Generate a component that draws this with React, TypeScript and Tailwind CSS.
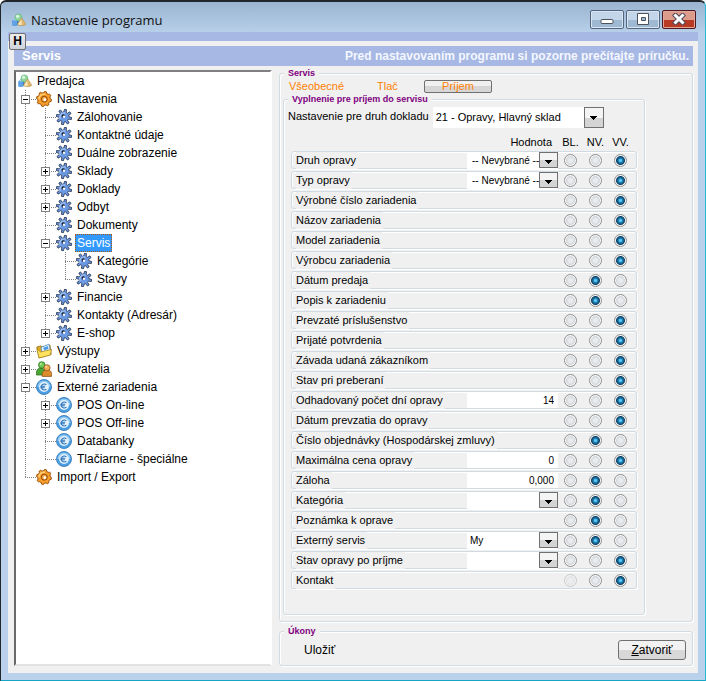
import { useState } from 'react';
import type { ReactNode } from 'react';

type IconName = 'gear' | 'cog' | 'folder' | 'users' | 'euro';

interface TreeNode {
  label: string;
  icon: IconName;
  expandable?: boolean;
  children?: TreeNode[];
}

interface Row {
  label: string;
  kind?: 'select' | 'input';
  value?: string;
  checked: number;
  locked?: boolean;
}

const tree: TreeNode[] = [
  {
    label: 'Nastavenia',
    icon: 'gear',
    children: [
      { label: 'Zálohovanie', icon: 'cog' },
      { label: 'Kontaktné údaje', icon: 'cog' },
      { label: 'Duálne zobrazenie', icon: 'cog' },
      { label: 'Sklady', icon: 'cog', expandable: true },
      { label: 'Doklady', icon: 'cog', expandable: true },
      { label: 'Odbyt', icon: 'cog', expandable: true },
      { label: 'Dokumenty', icon: 'cog' },
      {
        label: 'Servis',
        icon: 'cog',
        children: [
          { label: 'Kategórie', icon: 'cog' },
          { label: 'Stavy', icon: 'cog' },
        ],
      },
      { label: 'Financie', icon: 'cog', expandable: true },
      { label: 'Kontakty (Adresár)', icon: 'cog' },
      { label: 'E-shop', icon: 'cog', expandable: true },
    ],
  },
  { label: 'Výstupy', icon: 'folder', expandable: true },
  { label: 'Užívatelia', icon: 'users', expandable: true },
  {
    label: 'Externé zariadenia',
    icon: 'euro',
    children: [
      { label: 'POS On-line', icon: 'euro', expandable: true },
      { label: 'POS Off-line', icon: 'euro', expandable: true },
      { label: 'Databanky', icon: 'euro' },
      { label: 'Tlačiarne - špeciálne', icon: 'euro' },
    ],
  },
  { label: 'Import / Export', icon: 'gear' },
];

const rows: Row[] = [
  { label: 'Druh opravy', kind: 'select', value: '-- Nevybrané --', checked: 2 },
  { label: 'Typ opravy', kind: 'select', value: '-- Nevybrané --', checked: 2 },
  { label: 'Výrobné číslo zariadenia', checked: 2 },
  { label: 'Názov zariadenia', checked: 2 },
  { label: 'Model zariadenia', checked: 2 },
  { label: 'Výrobcu zariadenia', checked: 2 },
  { label: 'Dátum predaja', checked: 1 },
  { label: 'Popis k zariadeniu', checked: 1 },
  { label: 'Prevzaté príslušenstvo', checked: 2 },
  { label: 'Prijaté potvrdenia', checked: 2 },
  { label: 'Závada udaná zákazníkom', checked: 2 },
  { label: 'Stav pri preberaní', checked: 2 },
  { label: 'Odhadovaný počet dní opravy', kind: 'input', value: '14', checked: 2 },
  { label: 'Dátum prevzatia do opravy', checked: 2 },
  { label: 'Číslo objednávky (Hospodárskej zmluvy)', checked: 1 },
  { label: 'Maximálna cena opravy', kind: 'input', value: '0', checked: 2 },
  { label: 'Záloha', kind: 'input', value: '0,000', checked: 1 },
  { label: 'Kategória', kind: 'select', value: '', checked: 1 },
  { label: 'Poznámka k oprave', checked: 1 },
  { label: 'Externý servis', kind: 'select', value: 'My', checked: 1 },
  { label: 'Stav opravy po príjme', kind: 'select', value: '', checked: 2 },
  { label: 'Kontakt', checked: 2, locked: true },
];

const columns = ['BL.', 'NV.', 'VV.'];

// outline of a toothed wheel centred on 8,8
function wheel(teeth: number, outer: number, inner: number) {
  const step = (Math.PI * 2) / teeth;
  const points: string[] = [];
  for (let i = 0; i < teeth; i++) {
    const a = i * step + 0.2;
    [
      [a - step * 0.3, inner],
      [a - step * 0.17, outer],
      [a + step * 0.17, outer],
      [a + step * 0.3, inner],
    ].forEach(([angle, r]) => {
      points.push(`${(8 + r * Math.cos(angle)).toFixed(2)},${(8 + r * Math.sin(angle)).toFixed(2)}`);
    });
  }
  return `M${points.join('L')}Z`;
}

const cogPath = wheel(8, 7.8, 5);
const gearPath = wheel(8, 7.5, 6.3);

function Logo() {
  return (
    <svg viewBox="0 0 16 16" className="size-3.5 shrink-0" aria-hidden="true">
      <path d="M.6 8.6 2.6 6.4h5v6L5.8 14.4H.6z" fill="#2f76c9" />
      <path d="M.6 8.6h5.2v5.8H.6z" fill="#5ea3ea" />
      <path d="M.6 8.6 2.6 6.4h5L5.8 8.6z" fill="#b4dafa" />
      <circle cx="7.4" cy="5" r="4" fill="#8fd69a" stroke="#5cae78" strokeWidth=".6" />
      <circle cx="6.4" cy="3.8" r="1.8" fill="#dcf6e2" />
      <path d="M11 5.6 15.7 12.6c-.8 2.4-8.6 2.4-9.6 0z" fill="#dfb76d" stroke="#b08437" strokeWidth=".6" />
      <path d="M10.7 7 11 13.6c-1.6.1-3.2-.1-4-.8z" fill="#fae9bd" />
    </svg>
  );
}

function TreeIcon({ name }: { name: IconName }) {
  return (
    <svg viewBox="0 0 16 16" className="size-4 shrink-0" aria-hidden="true">
      {name === 'cog' && (
        <>
          <path d={cogPath} fill="#6b99e2" stroke="#2c3b5a" strokeWidth=".9" />
          <path d="M4.2 10A4.2 4.2 0 0 1 9.6 4.3" fill="none" stroke="#a9c8f6" strokeWidth="1.2" />
          <circle cx="7.3" cy="7" r="1.7" fill="#141c30" />
          <circle cx="8" cy="7.8" r="1.2" fill="#fff" />
        </>
      )}
      {name === 'gear' && (
        <>
          <path d={gearPath} fill="#f79f2a" stroke="#9a4d08" strokeWidth="1" strokeLinejoin="round" />
          <path d="M3 8.4A5 5 0 0 1 9 3.2" fill="none" stroke="#ffd07a" strokeWidth="1.4" />
          <circle cx="8.3" cy="8.2" r="3" fill="#f3a445" stroke="#8f4708" strokeWidth="1" />
          <circle cx="8.8" cy="8.7" r="1.4" fill="#fff" />
        </>
      )}
      {name === 'folder' && (
        <>
          <path d="M.8 4 5 2.8l1 1.2L14 2l1.2 9.5L3 14.8z" fill="#e0ac25" stroke="#8a6510" strokeWidth=".7" />
          <path d="m5 4.4 7.8-3.2 1.6 6.4-8.2 3z" fill="#eef6ff" stroke="#3c7fc0" strokeWidth=".7" />
          <path d="m7.2 4.8 4.6-1.9.7 3-4.4 1.7z" fill="#4b9de5" />
          <path d="M.8 5.4 4.6 9l11-2.6-1.4 5.7L3 15z" fill="#ffe25e" stroke="#a27a12" strokeWidth=".7" />
        </>
      )}
      {name === 'users' && (
        <>
          <path d="M.5 14c-.5-4.2.9-7 4.6-7 2.8 0 4 2 4 7z" fill="#48a832" stroke="#236315" strokeWidth=".7" />
          <circle cx="5.8" cy="4" r="3.3" fill="#6fc954" stroke="#236315" strokeWidth=".7" />
          <circle cx="4.9" cy="3" r="1.1" fill="#b8eba4" />
          <path d="M6.2 15.4c-.6-4.4 1-6.4 4.8-6.4s5.1 2 4.5 6.4z" fill="#dd8c2b" stroke="#80470d" strokeWidth=".7" />
          <circle cx="11" cy="6.8" r="3.1" fill="#f2ad52" stroke="#80470d" strokeWidth=".7" />
          <circle cx="10.2" cy="5.8" r="1" fill="#ffdca6" />
        </>
      )}
      {name === 'euro' && (
        <>
          <circle cx="8" cy="8" r="7.5" fill="#4a9fe2" stroke="#3a7cba" strokeWidth=".9" />
          <path d="M1.4 8a6.6 6.6 0 0 1 13.2 0z" fill="#8cc6f1" />
          <circle cx="8" cy="8" r="4.9" fill="#e4f2fc" />
          <path d="M10.4 5.9A3 3 0 1 0 10.4 10.1M4.4 7.3h4.8M4.4 8.8h4.4" fill="none" stroke="#2c73b8" strokeWidth="1.1" />
        </>
      )}
    </svg>
  );
}

function Guide({ up, down, branch }: { up: boolean; down: boolean; branch: boolean }) {
  return (
    <svg
      viewBox="0 0 20 18"
      className="h-[18px] w-5 shrink-0"
      stroke="#808080"
      strokeDasharray="1 1"
      shapeRendering="crispEdges"
      aria-hidden="true"
    >
      {up && <path d="M9.5 0v9" />}
      {down && <path d="M9.5 10v8" />}
      {branch && <path d="M9 9.5h11" />}
    </svg>
  );
}

interface BranchProps {
  node: TreeNode;
  last: boolean;
  trail: boolean[];
}

function Branch({ node, last, trail }: BranchProps) {
  const [open, setOpen] = useState(!!node.children);
  const selected = node.label === 'Servis';

  return (
    <li role="treeitem" aria-selected={selected}>
      <div className="flex h-[18px] items-center">
        {trail.map((line, i) => (
          <Guide key={i} up={line} down={line} branch={false} />
        ))}
        <div className="relative">
          <Guide up down={!last} branch />
          {(node.children || node.expandable) && (
            <button
              type="button"
              aria-label={node.label}
              onClick={() => setOpen(!open)}
              className="absolute left-[5px] top-[5px] size-[9px] border border-[#808080] bg-white"
            >
              <svg viewBox="0 0 7 7" className="size-[7px]" stroke="#000" shapeRendering="crispEdges">
                <path d="M1 3.5h5" />
                {!open && <path d="M3.5 1v5" />}
              </svg>
            </button>
          )}
        </div>
        <TreeIcon name={node.icon} />
        <span
          className={
            selected
              ? 'ml-[3px] border border-dotted border-[#b05800] bg-[#3399ff] px-px leading-4 text-white'
              : 'ml-[3px] border border-transparent px-px leading-4'
          }
        >
          {node.label}
        </span>
      </div>
      {open && node.children && (
        <ul role="group">
          {node.children.map((child, i) => (
            <Branch
              key={child.label}
              node={child}
              last={i === node.children!.length - 1}
              trail={[...trail, !last]}
            />
          ))}
        </ul>
      )}
    </li>
  );
}

function Group({ title, className, children }: { title: string; className?: string; children: ReactNode }) {
  return (
    <fieldset
      className={`min-w-0 rounded-[3px] border border-[#d0dbe2] shadow-[1px_1px_0_#fff,inset_1px_1px_0_#fff] ${className ?? ''}`}
    >
      <legend className="ml-1 bg-[#f0f0f0] px-1 text-[9px] font-bold leading-[10px] text-[#800080]">{title}</legend>
      {children}
    </fieldset>
  );
}

function Combo({ id, value, large }: { id: string; value: string; large?: boolean }) {
  return (
    <div className={large ? 'relative h-[21px] w-[171px]' : 'relative h-4 w-[91px]'}>
      <select
        id={id}
        className={
          large
            ? 'h-full w-full appearance-none bg-white pl-[3px] pr-5 text-[11px]'
            : `h-full w-full appearance-none bg-white text-[10px] ${value.startsWith('-') ? 'pl-[5px]' : 'pl-[3px]'}`
        }
      >
        <option>{value}</option>
      </select>
      <span
        className={`pointer-events-none absolute right-0 top-0 flex h-full items-center justify-center border border-[#707070] bg-linear-to-b from-[#f4f4f4] from-50% to-[#d4d4d4] to-50% ${large ? 'w-5' : 'w-[19px] pt-0.5'}`}
      >
        <svg viewBox="0 0 7 4" className="mt-px h-1 w-[7px]" shapeRendering="crispEdges">
          <path d="M0 0h7L3.5 4z" />
        </svg>
      </span>
    </div>
  );
}

function SettingRow({ row, index }: { row: Row; index: number }) {
  const [checked, setChecked] = useState(row.checked);
  const id = `row-${index}`;

  return (
    <div
      role="radiogroup"
      aria-label={row.label}
      className="flex h-[18px] items-center rounded-[3px] border border-[#d0dbe2] pr-[3px] shadow-[1px_1px_0_#fff,inset_1px_1px_0_#fff]"
    >
      <label
        htmlFor={row.kind ? id : `${id}-0`}
        className="ml-1 -mb-px h-[17px] whitespace-nowrap bg-[#f0f0f0] pr-0.5 text-[11px] leading-4"
      >
        {row.label}
      </label>
      <div className="ml-auto">
        {row.kind === 'select' && <Combo id={id} value={row.value ?? ''} />}
        {row.kind === 'input' && (
          <input
            id={id}
            defaultValue={row.value}
            className="block h-4 w-[91px] bg-white pr-1 text-right text-[10px]"
          />
        )}
      </div>
      {columns.map((column, i) => (
        <span key={column} className="flex w-[25px] justify-center pt-px">
          <input
            id={`${id}-${i}`}
            type="radio"
            name={id}
            aria-label={column}
            checked={checked === i}
            disabled={row.locked && i === 0}
            onChange={() => setChecked(i)}
            className="size-[13px] appearance-none rounded-full border border-[#8e8f8f] bg-[radial-gradient(circle_at_50%_50%,#e9ebee_0_2px,#d3d6db_4px,#f8f8f8_5px)] checked:bg-[radial-gradient(circle_at_50%_50%,#5cc8f2_0_1px,#1c86bd_2px,#123f63_4px,#f4f4f4_5px)] disabled:opacity-40"
          />
        </span>
      ))}
    </div>
  );
}

function TitleBar() {
  const button =
    'flex h-[19px] w-[34px] items-center justify-center rounded-[2px] border border-[#52677f] bg-linear-to-b from-[#c3d5e8] from-50% to-[#9fb9d3] to-50% shadow-[inset_0_0_0_1px_#d9e6f2]';
  return (
    <header className="flex h-[30px] items-center justify-between pl-[11px] pr-[9px]">
      <div className="flex items-center gap-[5px] pt-1.5">
        <Logo />
        <h1 className="font-['Open_Sans',sans-serif] text-[13px] leading-5 text-[#111]">Nastavenie programu</h1>
      </div>
      <div className="flex gap-0.5 pt-1">
        <button type="button" aria-label="Minimalizovať" className={button}>
          <svg viewBox="0 0 14 12" className="h-3 w-3.5">
            <rect x="1" y="6.5" width="12" height="4" rx="1" fill="#fff" stroke="#4c535c" />
          </svg>
        </button>
        <button type="button" aria-label="Maximalizovať" className={button}>
          <svg viewBox="0 0 14 12" className="h-3 w-3.5" stroke="#4c535c">
            <path d="M1.5.5h11v11h-11z" fill="#fff" />
            <path d="M5.5 4.5h4v3h-4z" fill="#9fb9d3" />
          </svg>
        </button>
        <button
          type="button"
          aria-label="Zavrieť"
          className="flex h-[19px] w-[34px] items-center justify-center rounded-[2px] border border-[#4d1620] bg-linear-to-b from-[#dd9b8b] from-50% to-[#b93a22] to-50% shadow-[inset_0_0_0_1px_#e0a99c]"
        >
          <svg viewBox="0 0 14 12" className="h-3 w-3.5" strokeLinecap="square">
            <path d="m3.5 2.5 7 7M10.5 2.5l-7 7" stroke="#51485a" strokeWidth="5" />
            <path d="m3.5 2.5 7 7M10.5 2.5l-7 7" stroke="#fff" strokeWidth="3" />
          </svg>
        </button>
      </div>
    </header>
  );
}

export default function App() {
  return (
    <div className="flex min-h-screen flex-col rounded-t-md border border-t-2 border-[#20262c] border-b-[#16a5c4] border-r-[#28b8d8] bg-[#b9d1ea] bg-[linear-gradient(#9ab4d0,#b9d1ea_32px)] font-['Liberation_Sans',Arial,sans-serif] text-xs text-black">
      <TitleBar />
      <div className="relative mx-[7px] mb-[7px] flex grow flex-col bg-[#f0f0f0]">
        <div className="h-[9px] bg-[#a6b8e3]" />
        <button
          type="button"
          className="absolute left-px top-px size-[17px] rounded-[2px] border border-[#707070] bg-linear-to-b from-[#ececec] to-[#cfd3dc] text-xs font-bold leading-[15px]"
        >
          H
        </button>
        <div className="ml-1.5 mr-[5px] mt-[5px] flex h-5 items-center justify-between bg-[#a6b8e3] pl-2 pr-1 font-bold text-white">
          <h2 className="text-[13px]">Servis</h2>
          <p className="text-[#f4f7ff]">Pred nastavovaním programu si pozorne prečítajte príručku.</p>
        </div>
        <main className="flex grow gap-[7px] pb-[7px] pl-1.5 pr-[5px]">
          <nav className="mt-1 w-[258px] shrink-0 border-2 border-b-[#e3e3e3] border-l-[#696969] border-r-white border-t-[#808080] bg-white">
            <div className="flex h-[18px] items-center gap-[5px] pl-0.5">
              <Logo />
              Predajca
            </div>
            <ul role="tree">
              {tree.map((node, i) => (
                <Branch key={node.label} node={node} last={i === tree.length - 1} trail={[]} />
              ))}
            </ul>
          </nav>
          <div className="mt-0.5 flex min-w-0 grow flex-col gap-1">
            <Group title="Servis" className="grow">
              <div className="pb-[5px] pl-[3px] pr-[47px]">
                <div className="flex h-4 items-center pl-1.5 text-[11px] text-[#ff8000]">
                  <button type="button" className="w-[88px] text-left">
                    Všeobecné
                  </button>
                  <button type="button" className="w-[47px] text-left">
                    Tlač
                  </button>
                  <button
                    type="button"
                    className="h-[13px] w-[68px] rounded-[2px] border border-[#707070] bg-linear-to-b from-[#f0f0f0] from-50% to-[#d6d6d6] to-50% leading-[11px]"
                  >
                    Príjem
                  </button>
                </div>
                <Group title="Vyplnenie pre príjem do servisu">
                  <div className="px-[7px] pb-[25px]">
                    <div className="-ml-[3px] flex items-start gap-1 pt-[3px] text-[11px]">
                      <label htmlFor="document" className="pt-0.5">
                        Nastavenie pre druh dokladu
                      </label>
                      <Combo id="document" value="21 - Opravy, Hlavný sklad" large />
                    </div>
                    <div className="flex h-[23px] items-end pb-0.5 pr-1 pt-1 text-[11px] leading-[13px]">
                      <span className="grow pr-1.5 text-right">Hodnota</span>
                      {columns.map((column) => (
                        <span key={column} className="w-[25px] text-center">
                          {column}
                        </span>
                      ))}
                    </div>
                    <div className="flex flex-col gap-0.5">
                      {rows.map((row, i) => (
                        <SettingRow key={row.label} row={row} index={i} />
                      ))}
                    </div>
                  </div>
                </Group>
              </div>
            </Group>
            <Group title="Úkony">
              <div className="flex items-center justify-between pb-[5px] pl-6 pr-1.5 pt-1">
                <button type="button">Uložiť</button>
                <button
                  type="button"
                  className="h-5 w-[68px] rounded-[3px] border border-[#707070] bg-linear-to-b from-[#f2f2f2] from-50% to-[#d8d8d8] to-50% leading-4"
                >
                  <u>Z</u>atvoriť
                </button>
              </div>
            </Group>
          </div>
        </main>
      </div>
    </div>
  );
}
